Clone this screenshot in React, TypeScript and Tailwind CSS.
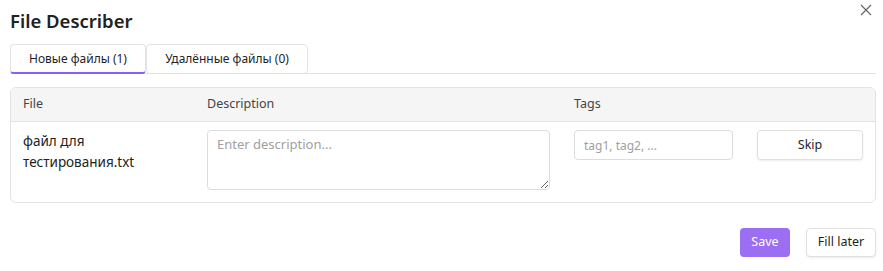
import React, { useState } from "react";

const font = { fontFamily: '"Segoe UI", "Noto Sans", "Open Sans", sans-serif' };

const App = () => {
  const [tab, setTab] = useState(0);
  const tabs = ["Новые файлы (1)", "Удалённые файлы (0)"];

  return (
    <div className="w-[883px] h-[271px] bg-white text-[#1f1f1f] relative" style={font}>
      {/* close button */}
      <button className="absolute right-[11px] top-[4px] text-[#666] leading-none">
        <svg width="12" height="12" viewBox="0 0 12 12" fill="none" stroke="currentColor" strokeWidth="1.2">
          <path d="M1 1 L11 11 M11 1 L1 11" />
        </svg>
      </button>

      <div className="px-[10px] pt-[8px] pr-[7px]">
        <h1 className="text-[18.5px] font-semibold leading-[26px] text-[#222]">File Describer</h1>

        {/* tabs */}
        <div className="mt-[10px] flex border-b border-[#e3e3e3]">
          {tabs.map((t, i) => (
            <button
              key={t}
              onClick={() => setTab(i)}
              className={
                "h-[30px] whitespace-nowrap text-[12px] border border-[#e3e3e3] rounded-[4px] bg-white -mb-px " +
                (i === tab ? "border-b-2 border-b-[#8b5cf6] w-[136px]" : "w-[162px]")
              }
            >
              {t}
            </button>
          ))}
        </div>

        {/* table */}
        <div className="mt-[13px] border border-[#e3e3e3] rounded-[6px] overflow-hidden">
          <div className="flex h-[34px] items-center bg-[#f5f5f5] border-b border-[#e3e3e3] text-[12.5px] text-[#444]">
            <div className="w-[196px] pl-[12px]">File</div>
            <div className="w-[367px]">Description</div>
            <div>Tags</div>
          </div>
          <div className="flex h-[80px] pt-[8px] text-[13.5px]">
            <div className="w-[196px] pl-[12px] pt-[1px] leading-[21px] text-[#222]">
              файл для
              <br />
              тестирования.txt
            </div>
            <div className="w-[367px]">
              <textarea
                placeholder="Enter description..."
                className="block w-[343px] h-[60px] border border-[#dcdcdc] rounded-[4px] px-[9px] py-[4px] text-[13px] placeholder:text-[#a0a0a0] outline-none"
              />
            </div>
            <div className="w-[183px]">
              <input
                placeholder="tag1, tag2, ..."
                className="block w-[159px] h-[30px] border border-[#dcdcdc] rounded-[4px] px-[9px] text-[12px] placeholder:text-[#a0a0a0] outline-none"
              />
            </div>
            <div>
              <button className="w-[106px] h-[30px] border border-[#e0e0e0] rounded-[4px] bg-white text-[12.5px] shadow-[0_1px_2px_rgba(0,0,0,0.08)]">
                Skip
              </button>
            </div>
          </div>
        </div>

        {/* footer */}
        <div className="mt-[25px] flex justify-end gap-[16px]">
          <button className="h-[29px] w-[50px] rounded-[4px] bg-[#9b6ef2] text-white text-[12.5px]">Save</button>
          <button className="h-[29px] w-[70px] rounded-[4px] border border-[#e0e0e0] bg-white text-[12.5px] shadow-[0_1px_2px_rgba(0,0,0,0.08)]">
            Fill later
          </button>
        </div>
      </div>
    </div>
  );
};

export default App;
